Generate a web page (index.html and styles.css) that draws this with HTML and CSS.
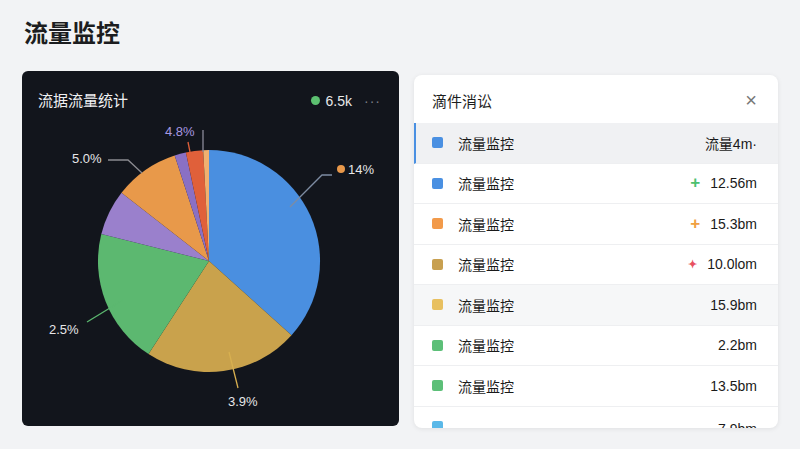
FILE: index.html
```html
<!DOCTYPE html>
<html lang="zh">
<head>
<meta charset="utf-8">
<link rel="stylesheet" href="styles.css">
</head>
<body>
<div class="page">
  <h1 class="title">流量监控</h1>
  <div class="main">
    <section class="chart-card">
      <div class="chart-head">
        <span class="chart-title">流据流量统计</span>
        <div class="chart-meta">
          <span class="dot"></span>
          <span class="meta-val">6.5k</span>
          <span class="more">···</span>
        </div>
      </div>
      <svg class="pie" width="377" height="315" viewBox="0 0 377 315">
        <path d="M187 150 L187 39 A111 111 0 0 1 269.5 224.3 Z" fill="#4a8fe0"/>
        <path d="M187 150 L269.5 224.3 A111 111 0 0 1 126.5 243.1 Z" fill="#c9a24c"/>
        <path d="M187 150 L126.5 243.1 A111 111 0 0 1 79.3 123.1 Z" fill="#5cb870"/>
        <path d="M187 150 L79.3 123.1 A111 111 0 0 1 99.5 81.7 Z" fill="#9a80cc"/>
        <path d="M187 150 L99.5 81.7 A111 111 0 0 1 152.7 44.4 Z" fill="#e8994a"/>
        <path d="M187 150 L152.7 44.4 A111 111 0 0 1 163.9 41.4 Z" fill="#8a70c4"/>
        <path d="M187 150 L163.9 41.4 A111 111 0 0 1 181.2 39.2 Z" fill="#e0603a"/>
        <path d="M187 150 L181.2 39.2 A111 111 0 0 1 187 39 Z" fill="#f0b070"/>
        <polyline points="268,96 300,64 310,64" class="lead" stroke="#7d8ca2"/>
        <circle cx="319" cy="58" r="4" fill="#e8984a"/>
        <text x="326" y="63" class="lbl">14%</text>
        <polyline points="86,49 106,49 120,62" class="lead" stroke="#8a8a90"/>
        <text x="50" y="52" class="lbl">5.0%</text>
        <line x1="166" y1="31" x2="168" y2="41" class="lead" stroke="#e0603a"/>
        <line x1="181" y1="19" x2="181" y2="41" class="lead" stroke="#8a8a9a"/>
        <text x="143" y="25" class="lbl lbl-purple">4.8%</text>
        <line x1="65" y1="211" x2="101" y2="189" class="lead" stroke="#5cb870"/>
        <text x="27" y="223" class="lbl">2.5%</text>
        <line x1="207" y1="241" x2="216" y2="277" class="lead" stroke="#d8b050"/>
        <text x="206" y="295" class="lbl">3.9%</text>
      </svg>
    </section>
    <section class="list-card">
      <div class="list-head">
        <span class="list-title">滴件消讼</span>
        <span class="close">×</span>
      </div>
      <div class="rows">
        <div class="row active"><span class="sq c-blue"></span><span class="name">流量监控</span><span class="val">流量4m·</span></div>
        <div class="row"><span class="sq c-blue"></span><span class="name">流量监控</span><span class="val"><span class="mark m-green">+</span>12.56m</span></div>
        <div class="row"><span class="sq c-orange"></span><span class="name">流量监控</span><span class="val"><span class="mark m-orange">+</span>15.3bm</span></div>
        <div class="row"><span class="sq c-tan"></span><span class="name">流量监控</span><span class="val"><span class="mark m-red">✦</span>10.0lom</span></div>
        <div class="row shaded"><span class="sq c-yellow"></span><span class="name">流量监控</span><span class="val">15.9bm</span></div>
        <div class="row"><span class="sq c-green"></span><span class="name">流量监控</span><span class="val">2.2bm</span></div>
        <div class="row"><span class="sq c-green"></span><span class="name">流量监控</span><span class="val">13.5bm</span></div>
        <div class="row last"><span class="sq c-sky"></span><span class="name"></span><span class="val">7.9bm</span></div>
      </div>
    </section>
  </div>
</div>
</body>
</html>
```
FILE: styles.css
```css
* { box-sizing: border-box; }
html, body { margin: 0; padding: 0; }
body {
  background: #f2f3f5;
  font-family: "Liberation Sans", "Noto Sans CJK SC", sans-serif;
  width: 800px;
  height: 449px;
  overflow: hidden;
}
.page { padding: 0 22px; }
.title {
  margin: 0;
  padding: 19px 0 0 2px;
  height: 71px;
  font-size: 24px;
  line-height: 30px;
  font-weight: 700;
  color: #1c1d20;
}
.main {
  display: flex;
  gap: 15px;
  align-items: flex-start;
}
.chart-card {
  width: 377px;
  height: 355px;
  background: #12151c;
  border-radius: 6px;
  overflow: hidden;
}
.chart-head {
  height: 40px;
  padding: 17px 18px 0 16px;
  display: flex;
  justify-content: space-between;
  align-items: center;
}
.chart-title {
  font-size: 15px;
  color: #f0f0f2;
  line-height: 20px;
  padding-top: 2px;
}
.chart-meta {
  display: flex;
  align-items: center;
  padding-top: 2px;
}
.dot {
  width: 9px; height: 9px;
  border-radius: 50%;
  background: #5cc070;
  margin-right: 6px;
}
.meta-val { font-size: 14px; color: #e8e8ea; }
.more { color: #7a7d85; font-size: 14px; margin-left: 12px; letter-spacing: 1px; }
.pie { display: block; }
.lead { fill: none; stroke-width: 1.3; }
.lbl { font-family: "Liberation Sans", sans-serif; font-size: 13px; fill: #e6e6e8; }
.lbl-purple { fill: #a898e0; }

.list-card {
  margin-top: 4px;
  width: 364px;
  height: 353px;
  background: #ffffff;
  border-radius: 8px;
  box-shadow: 0 1px 5px rgba(0,0,0,0.08);
  overflow: hidden;
}
.list-head {
  height: 48px;
  padding: 0 21px 0 18px;
  display: flex;
  align-items: center;
  justify-content: space-between;
}
.list-title { font-size: 15px; color: #1e1e1e; padding-top: 2px; }
.close { font-size: 20px; color: #777; font-weight: 300; padding-top: 2px; }
.row {
  height: 40.5px;
  display: flex;
  align-items: center;
  padding: 0 21px 0 18px;
  border-bottom: 1px solid #eeeff1;
  font-size: 14px;
  color: #1a1a1a;
}
.row.active { background: #f0f1f3; border-left: 2px solid #4a90e2; padding-left: 16px; }
.row.shaded { background: #f6f7f8; }
.row.last { align-items: flex-start; padding-top: 14px; }
.sq { width: 11px; height: 11px; border-radius: 2px; flex: none; }
.name { margin-left: 15px; flex: 1; }
.val { display: flex; align-items: center; }
.mark { margin-right: 10px; font-size: 17px; font-weight: 700; }
.m-green { color: #4cc070; }
.m-orange { color: #f0a040; }
.m-red { color: #e85060; font-size: 11px; }
.c-blue { background: #4a90e2; }
.c-orange { background: #f29a4a; }
.c-tan { background: #c8a050; }
.c-yellow { background: #e8c060; }
.c-green { background: #5cbf78; }
.c-sky { background: #5ab8e8; }
```
